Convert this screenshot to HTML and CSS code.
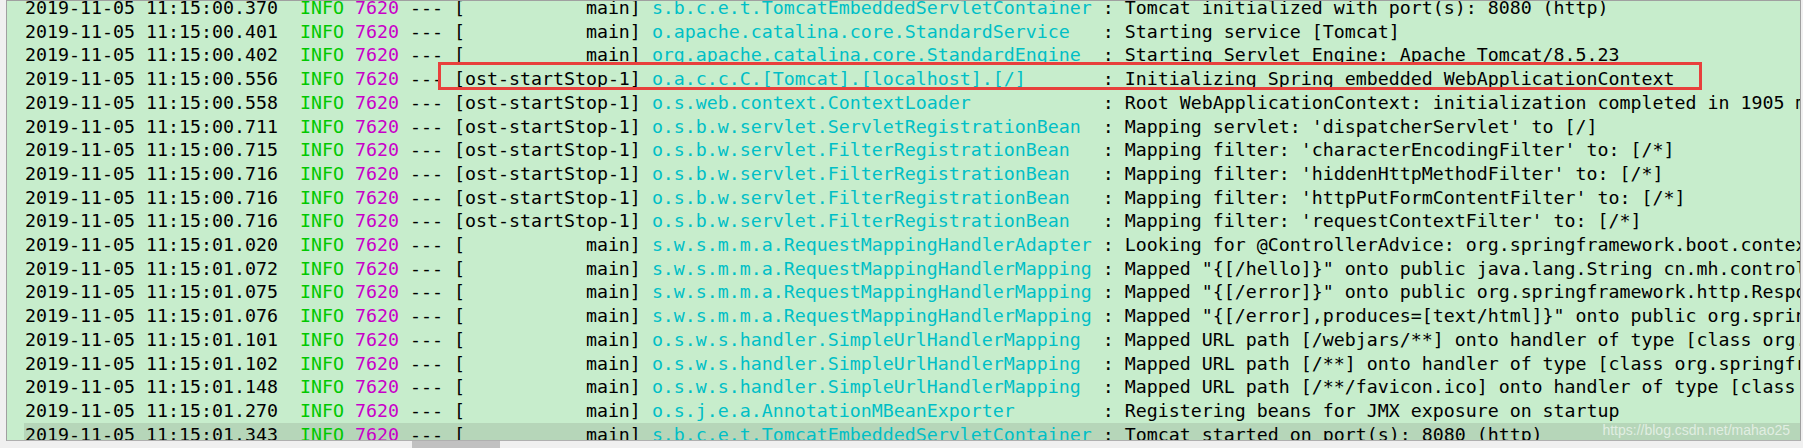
FILE: index.html
```html
<!DOCTYPE html>
<html lang="en">
<head>
    <meta charset="UTF-8">
    <title>Console</title>
    <link rel="stylesheet" href="styles.css">
</head>
<body>
    <div class="window">
        <div class="console">
            <div class="log">
                <div class="row"><span>2019-11-05 11:15:00.370</span>  <span class="lvl">INFO</span> <span class="pid">7620</span> --- [           main] <span class="cls">s.b.c.e.t.TomcatEmbeddedServletContainer</span> : Tomcat initialized with port(s): 8080 (http)</div>
                <div class="row"><span>2019-11-05 11:15:00.401</span>  <span class="lvl">INFO</span> <span class="pid">7620</span> --- [           main] <span class="cls">o.apache.catalina.core.StandardService  </span> : Starting service [Tomcat]</div>
                <div class="row"><span>2019-11-05 11:15:00.402</span>  <span class="lvl">INFO</span> <span class="pid">7620</span> --- [           main] <span class="cls">org.apache.catalina.core.StandardEngine </span> : Starting Servlet Engine: Apache Tomcat/8.5.23</div>
                <div class="row"><span>2019-11-05 11:15:00.556</span>  <span class="lvl">INFO</span> <span class="pid">7620</span> --- [ost-startStop-1] <span class="cls">o.a.c.c.C.[Tomcat].[localhost].[/]      </span> : Initializing Spring embedded WebApplicationContext</div>
                <div class="row"><span>2019-11-05 11:15:00.558</span>  <span class="lvl">INFO</span> <span class="pid">7620</span> --- [ost-startStop-1] <span class="cls">o.s.web.context.ContextLoader           </span> : Root WebApplicationContext: initialization completed in 1905 ms</div>
                <div class="row"><span>2019-11-05 11:15:00.711</span>  <span class="lvl">INFO</span> <span class="pid">7620</span> --- [ost-startStop-1] <span class="cls">o.s.b.w.servlet.ServletRegistrationBean </span> : Mapping servlet: 'dispatcherServlet' to [/]</div>
                <div class="row"><span>2019-11-05 11:15:00.715</span>  <span class="lvl">INFO</span> <span class="pid">7620</span> --- [ost-startStop-1] <span class="cls">o.s.b.w.servlet.FilterRegistrationBean  </span> : Mapping filter: 'characterEncodingFilter' to: [/*]</div>
                <div class="row"><span>2019-11-05 11:15:00.716</span>  <span class="lvl">INFO</span> <span class="pid">7620</span> --- [ost-startStop-1] <span class="cls">o.s.b.w.servlet.FilterRegistrationBean  </span> : Mapping filter: 'hiddenHttpMethodFilter' to: [/*]</div>
                <div class="row"><span>2019-11-05 11:15:00.716</span>  <span class="lvl">INFO</span> <span class="pid">7620</span> --- [ost-startStop-1] <span class="cls">o.s.b.w.servlet.FilterRegistrationBean  </span> : Mapping filter: 'httpPutFormContentFilter' to: [/*]</div>
                <div class="row"><span>2019-11-05 11:15:00.716</span>  <span class="lvl">INFO</span> <span class="pid">7620</span> --- [ost-startStop-1] <span class="cls">o.s.b.w.servlet.FilterRegistrationBean  </span> : Mapping filter: 'requestContextFilter' to: [/*]</div>
                <div class="row"><span>2019-11-05 11:15:01.020</span>  <span class="lvl">INFO</span> <span class="pid">7620</span> --- [           main] <span class="cls">s.w.s.m.m.a.RequestMappingHandlerAdapter</span> : Looking for @ControllerAdvice: org.springframework.boot.context.embedded.AnnotationConfigEmbeddedWebApplicationContext</div>
                <div class="row"><span>2019-11-05 11:15:01.072</span>  <span class="lvl">INFO</span> <span class="pid">7620</span> --- [           main] <span class="cls">s.w.s.m.m.a.RequestMappingHandlerMapping</span> : Mapped "{[/hello]}" onto public java.lang.String cn.mh.controller.HelloController.hello()</div>
                <div class="row"><span>2019-11-05 11:15:01.075</span>  <span class="lvl">INFO</span> <span class="pid">7620</span> --- [           main] <span class="cls">s.w.s.m.m.a.RequestMappingHandlerMapping</span> : Mapped "{[/error]}" onto public org.springframework.http.ResponseEntity</div>
                <div class="row"><span>2019-11-05 11:15:01.076</span>  <span class="lvl">INFO</span> <span class="pid">7620</span> --- [           main] <span class="cls">s.w.s.m.m.a.RequestMappingHandlerMapping</span> : Mapped "{[/error],produces=[text/html]}" onto public org.springframework.web</div>
                <div class="row"><span>2019-11-05 11:15:01.101</span>  <span class="lvl">INFO</span> <span class="pid">7620</span> --- [           main] <span class="cls">o.s.w.s.handler.SimpleUrlHandlerMapping </span> : Mapped URL path [/webjars/**] onto handler of type [class org.springframework</div>
                <div class="row"><span>2019-11-05 11:15:01.102</span>  <span class="lvl">INFO</span> <span class="pid">7620</span> --- [           main] <span class="cls">o.s.w.s.handler.SimpleUrlHandlerMapping </span> : Mapped URL path [/**] onto handler of type [class org.springframework</div>
                <div class="row"><span>2019-11-05 11:15:01.148</span>  <span class="lvl">INFO</span> <span class="pid">7620</span> --- [           main] <span class="cls">o.s.w.s.handler.SimpleUrlHandlerMapping </span> : Mapped URL path [/**/favicon.ico] onto handler of type [class org.springframework</div>
                <div class="row"><span>2019-11-05 11:15:01.270</span>  <span class="lvl">INFO</span> <span class="pid">7620</span> --- [           main] <span class="cls">o.s.j.e.a.AnnotationMBeanExporter       </span> : Registering beans for JMX exposure on startup</div>
                <div class="row current"><span>2019-11-05 11:15:01.343</span>  <span class="lvl">INFO</span> <span class="pid">7620</span> --- [           main] <span class="cls">s.b.c.e.t.TomcatEmbeddedServletContainer</span> : Tomcat started on port(s): 8080 (http)</div>
            </div>
            <div class="mark"></div>
            <div class="watermark">https://blog.csdn.net/mahao25</div>
        </div>
        <div class="hscroll">
            <div class="thumb"></div>
        </div>
    </div>
</body>
</html>
```

FILE: styles.css
```css
body {
    margin: 0;
    background: #f0f0f0;
    overflow: hidden;
}

.window {
    width: 1803px;
    height: 448px;
    display: flex;
    flex-direction: column;
}

.console {
    position: relative;
    height: 439px;
    margin-left: 6px;
    margin-right: 2px;
    background: #c7edcc;
    border: 1px solid #a0a0a0;
    border-bottom-color: #b0b0b0;
    overflow: hidden;
}

.log {
    margin-top: -5px;
    font-family: "DejaVu Sans Mono", "Liberation Mono", monospace;
    font-size: 18.27px;
    line-height: 23.7px;
    color: #000;
}

.row {
    white-space: pre;
    padding-left: 18px;
}

.row.current {
    margin-left: 17px;
    padding-left: 1px;
    background: #b6d6b9;
}

.lvl {
    color: #00c800;
}

.pid {
    color: #c800c8;
}

.cls {
    color: #00bfc6;
}

.mark {
    position: absolute;
    left: 431px;
    top: 61px;
    width: 1258px;
    height: 22px;
    border: 3px solid #e8403c;
}

.watermark {
    position: absolute;
    right: 10px;
    bottom: 2px;
    font-family: "Liberation Sans", Arial, sans-serif;
    font-size: 14px;
    color: rgba(255, 255, 255, 0.6);
}

.hscroll {
    flex: 1;
    padding-left: 412px;
}

.thumb {
    width: 88px;
    height: 100%;
    background: #c1c1c1;
}
```
